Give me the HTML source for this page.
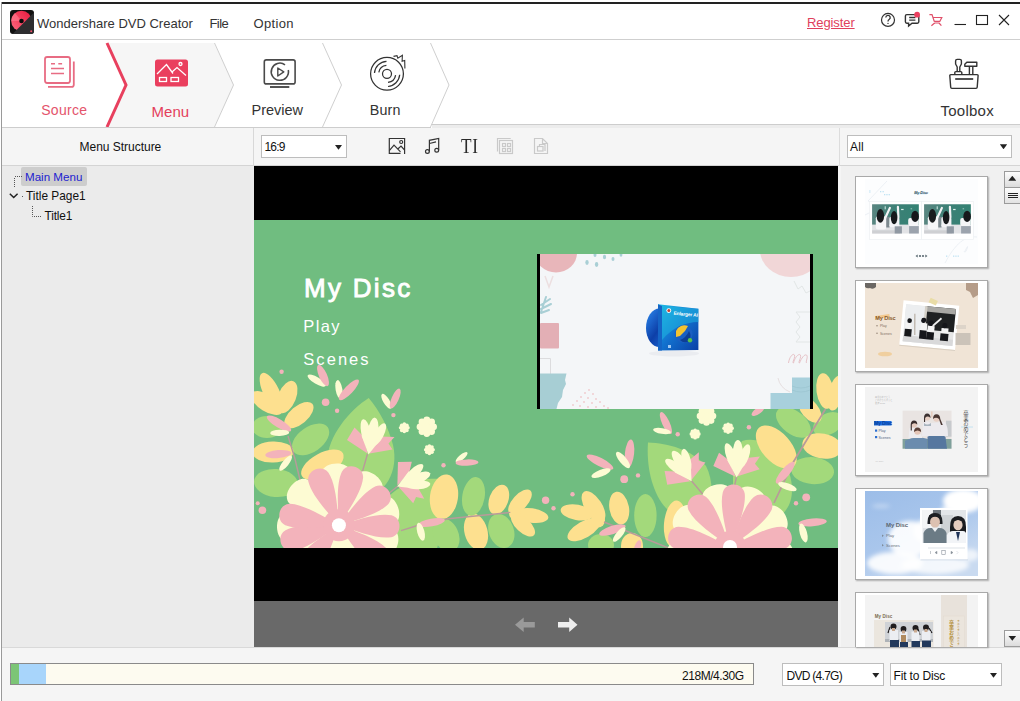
<!DOCTYPE html>
<html><head><meta charset="utf-8">
<style>
*{margin:0;padding:0;box-sizing:border-box}
html,body{width:1020px;height:701px;overflow:hidden;background:#fff}
body{font-family:"Liberation Sans","Noto Sans CJK JP",sans-serif;color:#333;position:relative}
.abs{position:absolute}
.t{position:absolute;white-space:nowrap;line-height:1}
#topline{left:1px;top:2px;width:1019px;height:2px;background:#222}
#leftline{left:1px;top:2px;width:1px;height:699px;background:#9a9a9a}
#tsep{left:2px;top:39px;width:1018px;height:1px;background:#cfcfcf}
#stepbar{left:2px;top:40px;width:1018px;height:87px;background:#fff}
#sep2{left:2px;top:127px;width:429px;height:1px;background:#cdcdcd}
#lhead{left:2px;top:128px;width:251px;height:37px;background:#f5f5f5}
#ltree{left:2px;top:166px;width:249px;height:481px;background:#ebebeb}
#lstrip{left:251px;top:166px;width:3px;height:481px;background:#ececec}
#lsep{left:2px;top:165px;width:1018px;height:1px;background:#d4d4d4}
#vsep{left:253px;top:128px;width:1px;height:38px;background:#d8d8d8}
#vsep2{left:839px;top:128px;width:1px;height:38px;background:#dcdcdc}
#chead{left:254px;top:128px;width:586px;height:37px;background:#f5f5f5}
#stage{left:254px;top:166px;width:584px;height:435px;background:#000}
#nav{left:254px;top:601px;width:584px;height:46px;background:#696969}
#right{left:838px;top:128px;width:182px;height:519px;background:#f0f0f0;border-left:3px solid #f5f5f5}
#rhead{left:839px;top:128px;width:181px;height:37px;background:#f5f5f5}
#bottom{left:2px;top:647px;width:1018px;height:54px;background:#f5f5f5}
#bsep{left:2px;top:647px;width:1018px;height:1px;background:#d9d9d9}
.combo{position:absolute;background:#fff;border:1px solid #bdbdbd}
.combo .t{font-size:12px;color:#111;top:5px;left:3px}
.arrow{position:absolute;width:7.4px;height:5px;margin:-0.7px 0 0 -0.2px;background:#222;clip-path:polygon(0 0,100% 0,50% 100%)}
.arrow.up{clip-path:polygon(50% 0,100% 100%,0 100%)}
</style></head><body>
<div class="abs" id="topline"></div>
<div class="abs" id="leftline"></div>
<div class="abs" id="tsep"></div>
<div class="abs" id="stepbar"></div>
<div class="abs" id="sep2"></div><div class="abs" style="left:431px;top:124px;width:589px;height:1px;background:#cdcdcd"></div><div class="abs" style="left:432px;top:125px;width:588px;height:3px;background:#ececec"></div>
<div class="abs" id="lhead"></div>
<div class="abs" id="ltree"></div>
<div class="abs" id="lstrip"></div>
<div class="abs" id="chead"></div>
<div class="abs" id="stage"></div>
<div class="abs" id="nav"></div>
<div class="abs" id="right"></div>
<div class="abs" id="rhead"></div>
<div class="abs" id="lsep"></div>
<div class="abs" id="vsep"></div><div class="abs" id="vsep2"></div>
<div class="abs" id="bottom"></div>
<div class="abs" id="bsep"></div>
<svg class="abs" style="left:10px;top:10px" width="24" height="24" viewBox="0 0 24 24">
<defs><clipPath id="lg"><rect x="0" y="0" width="24" height="24" rx="3"/></clipPath>
<linearGradient id="lgr" x1="0" y1="1" x2="1" y2="0"><stop offset="0" stop-color="#ff6a80"/><stop offset="1" stop-color="#e8173c"/></linearGradient></defs>
<g clip-path="url(#lg)"><rect width="24" height="24" fill="#111"/>
<circle cx="11.5" cy="11" r="10.3" fill="url(#lgr)"/>
<path d="M11.5 11 L1.2 11 A10.3 10.3 0 0 1 5 3 Z" fill="#ff8295" opacity=".55"/>
<circle cx="11.5" cy="11" r="2.3" fill="#0a0a0a"/>
<path d="M24 2.5 L24 24 L2.5 24 Z" fill="#2d2d2f"/>
<circle cx="21.2" cy="21.2" r="1" fill="#f0506a"/></g></svg>
<div class="t" style="left:37px;top:17px;font-size:13px;color:#333">Wondershare DVD Creator</div>
<div class="t" style="left:209.5px;top:17px;font-size:13px;color:#333;letter-spacing:-0.6px">File</div>
<div class="t" style="left:253.5px;top:17px;font-size:13px;color:#333;letter-spacing:0.35px">Option</div>
<div class="t" style="left:807px;top:16px;font-size:13px;color:#e0405c;text-decoration:underline;letter-spacing:-0.1px">Register</div>
<svg class="abs" style="left:875px;top:8px" width="145" height="26" viewBox="875 8 145 26" fill="none" stroke="#333" stroke-width="1.2">
<circle cx="888" cy="19.9" r="6.5"/>
<path d="M885.8 17.6 a2.2 2.2 0 1 1 3.3 1.9 c-0.8 0.5 -1.1 0.9 -1.1 2" stroke-width="1.3"/><circle cx="888" cy="23.4" r=".7" fill="#333" stroke="none"/>
<path d="M906.8 14.6 h10.6 a1.4 1.4 0 0 1 1.4 1.4 v5.8 a1.4 1.4 0 0 1 -1.4 1.4 h-5.4 l-3.4 2.9 v-2.9 h-1.8 a1.4 1.4 0 0 1 -1.4 -1.4 v-5.8 a1.4 1.4 0 0 1 1.4 -1.4z" stroke-width="1.4"/>
<path d="M909.2 17.5h6.2M909.2 20.2h6.2" stroke-width="1.3"/>
<circle cx="917.1" cy="14.7" r="2.9" fill="#ec3f5f" stroke="none"/>
<path d="M929.4 14.6 h2.6 l2.3 6.9 M933 17.5 h8.8 l-2 3.9 h-5.5 M934.6 23 h4.6 M934.6 23 l-3.2 2.7 M939 23 l2.4 2.7" stroke="#e0506a" stroke-width="1.2"/>
<path d="M954.5 24.5h11.5" stroke="#222" stroke-width="1.1"/>
<rect x="976.5" y="15.5" width="11" height="9" stroke="#222" stroke-width="1.1"/>
<path d="M999 15 l10 10 M1009 15 l-10 10" stroke="#222" stroke-width="1.1"/>
</svg>

<svg class="abs" style="left:2px;top:40px" width="1018" height="87" viewBox="2 40 1018 87">
<polygon points="107,43 214,43 233.500,85 214,127 107,127 126,85" fill="#f6f6f6"/>
<polyline points="107,43 126,85 107,127" fill="none" stroke="#e8405e" stroke-width="3"/>
<polyline points="214.5,43 233.5,85 214.5,127" fill="none" stroke="#cfcfcf" stroke-width="1"/>
<polyline points="322.5,43 341.5,85 322.5,127" fill="none" stroke="#cfcfcf" stroke-width="1"/>
<polyline points="430.5,43 449,85 430.5,127" fill="none" stroke="#cfcfcf" stroke-width="1"/>
<!-- source icon -->
<g fill="none" stroke="#e86c83" stroke-width="1.8">
<rect x="45" y="57" width="25" height="26" rx="2.2"/>
<path d="M73.8 61.5 v23.2 a2.2 2.2 0 0 1 -2.2 2.2 h-23.6" />
<path d="M51 63.7h4M58.3 63.7h3.8M51 68.5h13M51 73.5h13" stroke-width="1.5"/>
</g>
<!-- menu icon -->
<rect x="155" y="59.5" width="33" height="27" rx="2.5" fill="#ea3f5e"/>
<g fill="none" stroke="#fff" stroke-width="1.3">
<path d="M157 74 l9.5 -9.5 l6.5 9 M172 72 l5 -4.5 l9 8"/>
<circle cx="180.5" cy="64" r="1.5"/>
<rect x="159.500" y="77.500" width="7" height="4"/><rect x="171" y="77.500" width="7.500" height="4"/>
</g>
<!-- preview icon -->
<g fill="none" stroke="#4a4a4a" stroke-width="1.6">
<rect x="264.300" y="59.900" width="30.800" height="24" rx="2"/>
<path d="M285 64.800 A8.600 8.600 0 1 0 288.300 70"/>
<path d="M277.800 68 l6 3.900 l-6 4.100z" stroke-width="1.400" stroke-linejoin="round"/>
<path d="M270 87h19.300" stroke-width="1.900"/>
</g>
<!-- burn icon -->
<g fill="none" stroke="#333" stroke-width="1.250">
<circle cx="387" cy="73.800" r="16.400"/>
<circle cx="387" cy="73.800" r="4.500"/>
<path d="M374.500 73 A12.500 12.500 0 0 1 386.500 61.300"/>
<path d="M378.800 72.300 A8.500 8.500 0 0 1 386.400 65.300"/>
<path d="M399.700 74.800 A12.800 12.800 0 0 1 388 86.500"/>
<path d="M395.600 75.200 A8.600 8.600 0 0 1 388 82.400"/>
<path d="M393.500 56.400 l3.500 -0.800 l0.800 2.600 l4.600 -3 l-0.300 6 l2.600 -0.800 l0.200 8" stroke-width="1.100"/>
</g>
<!-- toolbox icon -->
<g fill="none" stroke="#333" stroke-width="1.400" stroke-linejoin="round">
<path d="M950.800 74.600 h26.300 a1 1 0 0 1 1 1.100 l-0.900 11.600 a1.200 1.200 0 0 1 -1.200 1.100 h-24.100 a1.200 1.200 0 0 1 -1.200 -1.100 l-0.900 -11.600 a1 1 0 0 1 1 -1.100z"/>
<path d="M955.200 79h18" stroke-width="1.700"/>
<path d="M954.800 74.400 v-1.800 a1 1 0 0 1 1 -1 h5 a1 1 0 0 1 1 1 v1.800 M957.200 71.500 v-4.500 l-1.600 -3 v-3 a1.600 1.600 0 0 1 1.600 -1.600 h2.600 a1.600 1.600 0 0 1 1.600 1.600 v3 l-1.600 3 v4.500"/>
<path d="M964.800 66.200 v-2 l2 -1.900 h10 v3.900z M969.400 66.200 v8.200 M972.800 66.200 v8.200"/>
</g>
</svg>
<div class="t" style="left:41.200px;top:103px;font-size:14px;color:#e4546c;letter-spacing:0.3px">Source</div>
<div class="t" style="left:151.600px;top:103.700px;font-size:15px;color:#e4405c">Menu</div>
<div class="t" style="left:251.500px;top:102.500px;font-size:14.500px;color:#333">Preview</div>
<div class="t" style="left:369.800px;top:102.800px;font-size:14.300px;color:#333;letter-spacing:0.15px">Burn</div>
<div class="t" style="left:940.500px;top:103px;font-size:15px;color:#333;letter-spacing:0.25px">Toolbox</div>

<div class="t" style="left:79.500px;top:141px;font-size:12px;color:#111;letter-spacing:-0.02px">Menu Structure</div>
<div class="abs" style="left:21px;top:167px;width:66px;height:19px;background:#cdcdcd;border-radius:2px"></div>
<div class="t" style="left:25px;top:171px;font-size:11.600px;color:#1c1cd0">Main Menu</div>
<div class="t" style="left:26px;top:190.500px;font-size:11.900px;color:#111">Title Page1</div>
<div class="t" style="left:44.500px;top:210.500px;font-size:11.900px;color:#111;letter-spacing:-0.15px">Title1</div>
<svg class="abs" style="left:2px;top:166px" width="60" height="60" viewBox="2 166 60 60" fill="none">
<path d="M14.500 187 V177 M15 176.500 H22" stroke="#555" stroke-width="1" stroke-dasharray="1 1"/>
<path d="M32.500 206 V216.500 H41" stroke="#555" stroke-width="1" stroke-dasharray="1 1"/>
<path d="M22 196.500h1" stroke="#555" stroke-width="1"/>
<path d="M9.800 193.800 l3.900 3.700 l3.900 -3.700" stroke="#222" stroke-width="1.500"/>
</svg>

<div class="combo" style="left:261px;top:135px;width:86px;height:23px"><div class="t" style="letter-spacing:-0.85px;left:2.500px">16:9</div><div class="arrow" style="left:73px;top:9.500px"></div></div>
<svg class="abs" style="left:380px;top:130px" width="180" height="32" viewBox="380 130 180 32" fill="none" stroke="#333" stroke-width="1.200">
<path d="M400.500 153.400 H389.300 V138.500 H404.600 V153.900"/>
<circle cx="401.200" cy="142" r="1.500"/>
<path d="M389.300 150.600 l4.700 -5.400 l6.500 6.600 M397.800 149 l3.200 -3 l3.600 4"/>
<circle cx="427.400" cy="151.500" r="1.900"/><circle cx="436.700" cy="150.200" r="1.900"/>
<path d="M429.400 151.500 V140.300 L438.700 138.400 V150.200 M429.400 143.500 L436 141.800"/>
<g stroke="#c9c9c9">
<path d="M497.500 151.600 V138.500 H510.700"/>
<rect x="499.500" y="140.500" width="13" height="13"/>
<rect x="502.500" y="143.500" width="3" height="3"/><rect x="507.500" y="143.500" width="3" height="3"/>
<rect x="502.500" y="148.500" width="3" height="3"/><rect x="507.500" y="148.500" width="3" height="3"/>
<path d="M534.500 138.500 H542.500 L547.500 143.500 V153.500 H534.500z M542.500 138.500 V143.500 H547.500"/>
<rect x="537.500" y="146.500" width="5.500" height="4.500"/><path d="M539.500 146.500 V144.500 H545 V151"/>
</g>
</svg>
<div class="t" style="left:461px;top:136px;font-family:'Liberation Serif',serif;font-size:20px;color:#2a2a2a;transform:scaleX(0.86);transform-origin:0 0;letter-spacing:1px">TI</div>

<!--STAGE_BEGIN--><svg class="abs" style="left:254px;top:220px" width="584" height="328" viewBox="254 220 584 328">
<defs><clipPath id="tc"><rect x="540" y="254" width="270" height="155"/></clipPath>
<linearGradient id="disc" x1="0" y1="0" x2="1" y2="1"><stop offset="0" stop-color="#2b8af0"/><stop offset=".5" stop-color="#0d3fa8"/><stop offset="1" stop-color="#1f78e6"/></linearGradient>
<linearGradient id="box" x1="0" y1="0" x2="1" y2="1"><stop offset="0" stop-color="#1fc0e6"/><stop offset=".5" stop-color="#1272cf"/><stop offset="1" stop-color="#0b3fa6"/></linearGradient></defs>
<rect x="254" y="220" width="584" height="328" fill="#70bd80"/>
<ellipse cx="267" cy="427" rx="11" ry="15" fill="#a3d97b" transform="rotate(90 267 427)"/>
<ellipse cx="310.6" cy="439.4" rx="12.5" ry="21" fill="#a3d97b" transform="rotate(55 310.6 439.4)"/>
<path d="M368.7,398 C350,410 328,435 327,462 C327,482 340,497 360,497 C386,497 399,470 393,445 C389,428 379,410 368.700,398Z" fill="#a3d97b" />
<path d="M441,479 C420,477 396,485 384,502 L380,548 L437,548 C446,525 447,500 441,479Z" fill="#a3d97b" />
<ellipse cx="276" cy="483" rx="14" ry="22" fill="#a3d97b" transform="rotate(95 276 483)"/>
<path d="M648,442.500 C646,470 654,497 668,510 L702,524 C714,503 714,482 706,466 C692,450 668,443 648,442.500Z" fill="#a3d97b" />
<path d="M742,441 C764,434 792,458 792,490 C792,512 776,522 760,522 L733,522 L733,462Z" fill="#a3d97b" />
<ellipse cx="793.4" cy="422.5" rx="11.5" ry="20" fill="#a3d97b" transform="rotate(-53 793.4 422.5)"/>
<ellipse cx="812.6" cy="470.6" rx="13.5" ry="21.5" fill="#a3d97b" transform="rotate(95 812.6 470.6)"/>
<ellipse cx="828" cy="424" rx="10.5" ry="16" fill="#a3d97b" transform="rotate(62 828 424)"/>
<ellipse cx="645.4" cy="515.6" rx="11.2" ry="21.5" fill="#a3d97b" transform="rotate(0 645.4 515.6)"/>
<ellipse cx="601" cy="545" rx="11" ry="13" fill="#a3d97b" transform="rotate(90 601 545)"/>
<ellipse cx="271.5" cy="392.5" rx="8" ry="21.5" fill="#fde08f" transform="rotate(-26 271.5 392.5)"/>
<ellipse cx="287" cy="397" rx="9" ry="17" fill="#fde08f" transform="rotate(22 287 397)"/>
<ellipse cx="267" cy="403" rx="8.5" ry="18" fill="#fde08f" transform="rotate(-58 267 403)"/>
<circle cx="279" cy="406" r="7" fill="#fde08f"/>
<ellipse cx="298.9" cy="415.1" rx="9" ry="17.5" fill="#fde08f" transform="rotate(50 298.9 415.1)"/>
<ellipse cx="273" cy="452" rx="10.5" ry="20.5" fill="#fde08f" transform="rotate(88 273 452)"/>
<ellipse cx="322.4" cy="464.7" rx="11.5" ry="23.5" fill="#fde08f" transform="rotate(61 322.4 464.7)"/>
<ellipse cx="444" cy="496.8" rx="14" ry="22.5" fill="#fde08f" transform="rotate(8 444 496.8)"/>
<ellipse cx="498.8" cy="499.6" rx="9.5" ry="15.5" fill="#fde08f" transform="rotate(20 498.8 499.6)"/>
<ellipse cx="520" cy="502" rx="7.5" ry="15.5" fill="#fde08f" transform="rotate(42 520 502)"/>
<ellipse cx="531.5" cy="515.5" rx="7.2" ry="17" fill="#fde08f" transform="rotate(98 531.5 515.5)"/>
<ellipse cx="523" cy="525" rx="7.2" ry="15" fill="#fde08f" transform="rotate(133 523 525)"/>
<circle cx="515" cy="513.5" r="6" fill="#fde08f"/>
<ellipse cx="476" cy="531.7" rx="11.5" ry="18.5" fill="#fde08f" transform="rotate(-15 476 531.7)"/>
<ellipse cx="593.5" cy="506.5" rx="8.5" ry="17.5" fill="#fde08f" transform="rotate(-33 593.5 506.5)"/>
<ellipse cx="577" cy="512.4" rx="7.8" ry="16.5" fill="#fde08f" transform="rotate(-80 577 512.4)"/>
<ellipse cx="584" cy="529.6" rx="8.2" ry="18.5" fill="#fde08f" transform="rotate(-120 584 529.6)"/>
<circle cx="598" cy="520.5" r="7" fill="#fde08f"/>
<ellipse cx="619.2" cy="508.1" rx="9.8" ry="16.5" fill="#fde08f" transform="rotate(-10 619.2 508.1)"/>
<ellipse cx="675" cy="524" rx="11" ry="23.5" fill="#fde08f" transform="rotate(5 675 524)"/>
<ellipse cx="632" cy="546" rx="11" ry="13" fill="#fde08f" transform="rotate(0 632 546)"/>
<ellipse cx="776.3" cy="447.1" rx="14.5" ry="26" fill="#fde08f" transform="rotate(-42 776.3 447.1)"/>
<ellipse cx="822.2" cy="446" rx="12.5" ry="20" fill="#fde08f" transform="rotate(100 822.2 446)"/>
<ellipse cx="825" cy="391" rx="8.5" ry="18" fill="#fde08f" transform="rotate(-8 825 391)"/>
<ellipse cx="836" cy="393" rx="7.5" ry="18" fill="#fde08f" transform="rotate(14 836 393)"/>
<ellipse cx="810" cy="410" rx="8.5" ry="15" fill="#fde08f" transform="rotate(-40 810 410)"/>
<ellipse cx="473.5" cy="496.4" rx="11.2" ry="19.5" fill="#a3d97b" transform="rotate(10 473.5 496.4)"/>
<ellipse cx="446" cy="535" rx="12.5" ry="17.5" fill="#a3d97b" transform="rotate(-25 446 535)"/>
<ellipse cx="501.3" cy="531" rx="12.5" ry="17.5" fill="#a3d97b" transform="rotate(-20 501.3 531)"/>
<path d="M288,436 L295,459 L300,480" fill="none" stroke="#b99a9a" stroke-width="1.4"/>
<path d="M367.500,454 L362,473" fill="none" stroke="#b99a9a" stroke-width="1.4"/>
<path d="M398,486 L388,494" fill="none" stroke="#b99a9a" stroke-width="1.4"/>
<path d="M401,530.600 L418.300,525.300 L448.200,518.800 L510.300,512.400" fill="none" stroke="#b99a9a" stroke-width="1.4"/>
<path d="M604,522 L668.500,548" fill="none" stroke="#b99a9a" stroke-width="1.4"/>
<path d="M691,480.300 L703,494.500" fill="none" stroke="#b99a9a" stroke-width="1.4"/>
<path d="M736.700,476 L734.500,486" fill="none" stroke="#b99a9a" stroke-width="1.4"/>
<path d="M825.500,409 L793.400,462 L774,503" fill="none" stroke="#b99a9a" stroke-width="1.7"/>
<ellipse cx="279" cy="423.5" rx="4.2" ry="14" fill="#f3b3bb" transform="rotate(-59 279 423.5)"/>
<ellipse cx="279.7" cy="432.8" rx="3.1" ry="9.5" fill="#fdfbd3" transform="rotate(88 279.7 432.8)"/>
<ellipse cx="278.3" cy="454.1" rx="4" ry="13" fill="#f3b3bb" transform="rotate(85 278.3 454.1)"/>
<ellipse cx="285.6" cy="463.2" rx="3.1" ry="9.5" fill="#fdfbd3" transform="rotate(39 285.6 463.2)"/>
<ellipse cx="316.8" cy="380.6" rx="3.4" ry="10.5" fill="#fdfbd3" transform="rotate(-60 316.8 380.6)"/>
<ellipse cx="323" cy="375.5" rx="4" ry="11.5" fill="#f3b3bb" transform="rotate(-24 323 375.5)"/>
<ellipse cx="339" cy="389.5" rx="3.4" ry="9.5" fill="#fdfbd3" transform="rotate(-10 339 389.5)"/>
<ellipse cx="348.9" cy="389.8" rx="4.2" ry="13.8" fill="#f3b3bb" transform="rotate(44 348.9 389.8)"/>
<ellipse cx="386.4" cy="401.2" rx="3.1" ry="8.5" fill="#fdfbd3" transform="rotate(-31 386.4 401.2)"/>
<ellipse cx="395.2" cy="398.6" rx="3.6" ry="10.8" fill="#f3b3bb" transform="rotate(24 395.2 398.6)"/>
<ellipse cx="461.6" cy="457.3" rx="2.6" ry="7.5" fill="#fdfbd3" transform="rotate(50 461.6 457.3)"/>
<ellipse cx="467" cy="462.6" rx="3.2" ry="11.5" fill="#f3b3bb" transform="rotate(88 467 462.6)"/>
<ellipse cx="431.5" cy="522.5" rx="3.9" ry="13.5" fill="#f3b3bb" transform="rotate(79 431.5 522.5)"/>
<ellipse cx="420.8" cy="531.7" rx="3.6" ry="9.2" fill="#fdfbd3" transform="rotate(-15 420.8 531.7)"/>
<ellipse cx="665.9" cy="423.1" rx="3.7" ry="12" fill="#f3b3bb" transform="rotate(-25 665.9 423.1)"/>
<ellipse cx="662" cy="431" rx="2.9" ry="9" fill="#fdfbd3" transform="rotate(100 662 431)"/>
<ellipse cx="629.5" cy="453.5" rx="4.6" ry="14" fill="#f3b3bb" transform="rotate(6 629.5 453.5)"/>
<ellipse cx="623" cy="460" rx="3.6" ry="10.2" fill="#fdfbd3" transform="rotate(-40 623 460)"/>
<ellipse cx="600" cy="462.1" rx="4.2" ry="14.8" fill="#f3b3bb" transform="rotate(-63 600 462.1)"/>
<ellipse cx="601" cy="473.2" rx="3.4" ry="10.2" fill="#fdfbd3" transform="rotate(69 601 473.2)"/>
<ellipse cx="612.4" cy="530" rx="4.2" ry="13.8" fill="#f3b3bb" transform="rotate(72 612.4 530)"/>
<ellipse cx="619.2" cy="534.5" rx="3.1" ry="9.2" fill="#fdfbd3" transform="rotate(40 619.2 534.5)"/>
<ellipse cx="637.5" cy="547" rx="3" ry="7" fill="#f3b3bb" transform="rotate(20 637.5 547)"/>
<ellipse cx="785.2" cy="472.7" rx="4.2" ry="13.8" fill="#f3b3bb" transform="rotate(40 785.2 472.7)"/>
<ellipse cx="787.4" cy="486.6" rx="3.4" ry="9.8" fill="#fdfbd3" transform="rotate(110 787.4 486.6)"/>
<ellipse cx="812.6" cy="522.4" rx="3.9" ry="14.2" fill="#f3b3bb" transform="rotate(85 812.6 522.4)"/>
<ellipse cx="803.4" cy="533" rx="3.6" ry="9.8" fill="#fdfbd3" transform="rotate(-15 803.4 533)"/>
<ellipse cx="758" cy="411" rx="3.1" ry="7.5" fill="#f3b3bb" transform="rotate(55 758 411)"/>
<circle cx="404.3" cy="427.8" r="4.2" fill="#fdfbd3"/>
<circle cx="408" cy="427.8" r="1.8" fill="#fdfbd3"/>
<circle cx="406.9" cy="430.4" r="1.8" fill="#fdfbd3"/>
<circle cx="404.3" cy="431.5" r="1.8" fill="#fdfbd3"/>
<circle cx="401.7" cy="430.4" r="1.8" fill="#fdfbd3"/>
<circle cx="400.6" cy="427.8" r="1.8" fill="#fdfbd3"/>
<circle cx="401.7" cy="425.2" r="1.8" fill="#fdfbd3"/>
<circle cx="404.3" cy="424.1" r="1.8" fill="#fdfbd3"/>
<circle cx="406.9" cy="425.2" r="1.8" fill="#fdfbd3"/>
<circle cx="426.8" cy="426.8" r="7.8" fill="#fdfbd3"/>
<circle cx="433.6" cy="426.8" r="3.4" fill="#fdfbd3"/>
<circle cx="431.6" cy="431.6" r="3.4" fill="#fdfbd3"/>
<circle cx="426.8" cy="433.6" r="3.4" fill="#fdfbd3"/>
<circle cx="422" cy="431.6" r="3.4" fill="#fdfbd3"/>
<circle cx="420" cy="426.8" r="3.4" fill="#fdfbd3"/>
<circle cx="422" cy="422" r="3.4" fill="#fdfbd3"/>
<circle cx="426.8" cy="420" r="3.4" fill="#fdfbd3"/>
<circle cx="431.6" cy="422" r="3.4" fill="#fdfbd3"/>
<circle cx="429.4" cy="449.7" r="4.2" fill="#fdfbd3"/>
<circle cx="433.1" cy="449.7" r="1.8" fill="#fdfbd3"/>
<circle cx="432" cy="452.3" r="1.8" fill="#fdfbd3"/>
<circle cx="429.4" cy="453.4" r="1.8" fill="#fdfbd3"/>
<circle cx="426.8" cy="452.3" r="1.8" fill="#fdfbd3"/>
<circle cx="425.7" cy="449.7" r="1.8" fill="#fdfbd3"/>
<circle cx="426.8" cy="447.1" r="1.8" fill="#fdfbd3"/>
<circle cx="429.4" cy="446" r="1.8" fill="#fdfbd3"/>
<circle cx="432" cy="447.1" r="1.8" fill="#fdfbd3"/>
<circle cx="706.5" cy="416" r="7.5" fill="#fdfbd3"/>
<circle cx="713" cy="416" r="3.3" fill="#fdfbd3"/>
<circle cx="711.1" cy="420.6" r="3.3" fill="#fdfbd3"/>
<circle cx="706.5" cy="422.5" r="3.3" fill="#fdfbd3"/>
<circle cx="701.9" cy="420.6" r="3.3" fill="#fdfbd3"/>
<circle cx="700" cy="416" r="3.3" fill="#fdfbd3"/>
<circle cx="701.9" cy="411.4" r="3.3" fill="#fdfbd3"/>
<circle cx="706.5" cy="409.5" r="3.3" fill="#fdfbd3"/>
<circle cx="711.1" cy="411.4" r="3.3" fill="#fdfbd3"/>
<circle cx="695.1" cy="434" r="4.3" fill="#fdfbd3"/>
<circle cx="698.8" cy="434" r="1.9" fill="#fdfbd3"/>
<circle cx="697.7" cy="436.6" r="1.9" fill="#fdfbd3"/>
<circle cx="695.1" cy="437.7" r="1.9" fill="#fdfbd3"/>
<circle cx="692.5" cy="436.6" r="1.9" fill="#fdfbd3"/>
<circle cx="691.4" cy="434" r="1.9" fill="#fdfbd3"/>
<circle cx="692.5" cy="431.4" r="1.9" fill="#fdfbd3"/>
<circle cx="695.1" cy="430.3" r="1.9" fill="#fdfbd3"/>
<circle cx="697.7" cy="431.4" r="1.9" fill="#fdfbd3"/>
<circle cx="728.1" cy="428.2" r="4.4" fill="#fdfbd3"/>
<circle cx="732" cy="428.2" r="1.9" fill="#fdfbd3"/>
<circle cx="730.8" cy="430.9" r="1.9" fill="#fdfbd3"/>
<circle cx="728.1" cy="432.1" r="1.9" fill="#fdfbd3"/>
<circle cx="725.4" cy="430.9" r="1.9" fill="#fdfbd3"/>
<circle cx="724.2" cy="428.2" r="1.9" fill="#fdfbd3"/>
<circle cx="725.4" cy="425.5" r="1.9" fill="#fdfbd3"/>
<circle cx="728.1" cy="424.3" r="1.9" fill="#fdfbd3"/>
<circle cx="730.8" cy="425.5" r="1.9" fill="#fdfbd3"/>
<g transform="translate(368.5 453.5) rotate(0) scale(1.0)">
<path d="M-1,0 L-21.5,-13.5 L-14,-26 L-6,-18 C-4,-12 -2,-6 -1,0Z" fill="#f3b3bb"/>
<path d="M1,0 L24,-4 L20,-10 L26,-16.500 L12,-17 C6,-12 3,-6 1,0Z" fill="#f3b3bb"/>
<ellipse cx="-2.500" cy="-21" rx="4.800" ry="13.500" fill="#fdfbd3" transform="rotate(-12 -2.500 -21)"/>
<ellipse cx="4.500" cy="-22" rx="5.200" ry="14" fill="#fdfbd3" transform="rotate(8 4.500 -22)"/>
<ellipse cx="10.500" cy="-19" rx="4.600" ry="12.500" fill="#fdfbd3" transform="rotate(28 10.500 -19)"/>
<path d="M0,1 L-7,-18 L12,-14Z" fill="#fdfbd3"/>
</g>
<g transform="translate(397.9 486) rotate(58) scale(0.95)">
<path d="M-1,0 L-21.5,-13.5 L-14,-26 L-6,-18 C-4,-12 -2,-6 -1,0Z" fill="#f3b3bb"/>
<path d="M1,0 L24,-4 L20,-10 L26,-16.500 L12,-17 C6,-12 3,-6 1,0Z" fill="#f3b3bb"/>
<ellipse cx="-2.500" cy="-21" rx="4.800" ry="13.500" fill="#fdfbd3" transform="rotate(-12 -2.500 -21)"/>
<ellipse cx="4.500" cy="-22" rx="5.200" ry="14" fill="#fdfbd3" transform="rotate(8 4.500 -22)"/>
<ellipse cx="10.500" cy="-19" rx="4.600" ry="12.500" fill="#fdfbd3" transform="rotate(28 10.500 -19)"/>
<path d="M0,1 L-7,-18 L12,-14Z" fill="#fdfbd3"/>
</g>
<g transform="translate(691 480.5) rotate(-42) scale(0.95)">
<path d="M-1,0 L-21.5,-13.5 L-14,-26 L-6,-18 C-4,-12 -2,-6 -1,0Z" fill="#f3b3bb"/>
<path d="M1,0 L24,-4 L20,-10 L26,-16.500 L12,-17 C6,-12 3,-6 1,0Z" fill="#f3b3bb"/>
<ellipse cx="-2.500" cy="-21" rx="4.800" ry="13.500" fill="#fdfbd3" transform="rotate(-12 -2.500 -21)"/>
<ellipse cx="4.500" cy="-22" rx="5.200" ry="14" fill="#fdfbd3" transform="rotate(8 4.500 -22)"/>
<ellipse cx="10.500" cy="-19" rx="4.600" ry="12.500" fill="#fdfbd3" transform="rotate(28 10.500 -19)"/>
<path d="M0,1 L-7,-18 L12,-14Z" fill="#fdfbd3"/>
</g>
<g transform="translate(736.5 476.5) rotate(-8) scale(1.0)">
<path d="M-1,0 L-21.5,-13.5 L-14,-26 L-6,-18 C-4,-12 -2,-6 -1,0Z" fill="#f3b3bb"/>
<path d="M1,0 L24,-4 L20,-10 L26,-16.500 L12,-17 C6,-12 3,-6 1,0Z" fill="#f3b3bb"/>
<ellipse cx="-2.500" cy="-21" rx="4.800" ry="13.500" fill="#fdfbd3" transform="rotate(-12 -2.500 -21)"/>
<ellipse cx="4.500" cy="-22" rx="5.200" ry="14" fill="#fdfbd3" transform="rotate(8 4.500 -22)"/>
<ellipse cx="10.500" cy="-19" rx="4.600" ry="12.500" fill="#fdfbd3" transform="rotate(28 10.500 -19)"/>
<path d="M0,1 L-7,-18 L12,-14Z" fill="#fdfbd3"/>
</g>
<circle cx="338.9" cy="525.3" r="40" fill="#fdfbd3"/>
<path d="M0,0 C-8.1,-18.7 -18.1,-39.8 -14.9,-53.5 C-11.3,-64.7 11.3,-64.7 14.9,-53.5 C18.1,-39.8 8.1,-18.7 0,0Z" fill="#fdfbd3" transform="translate(338.9 525.3) rotate(-92)"/>
<path d="M0,0 C-8.1,-18.7 -18.1,-39.8 -14.9,-53.5 C-11.3,-64.7 11.3,-64.7 14.9,-53.5 C18.1,-39.8 8.1,-18.7 0,0Z" fill="#fdfbd3" transform="translate(338.9 525.3) rotate(-50)"/>
<path d="M0,0 C-8.1,-18.7 -18.1,-39.8 -14.9,-53.5 C-11.3,-64.7 11.3,-64.7 14.9,-53.5 C18.1,-39.8 8.1,-18.7 0,0Z" fill="#fdfbd3" transform="translate(338.9 525.3) rotate(-3)"/>
<path d="M0,0 C-8.1,-18.7 -18.1,-39.8 -14.9,-53.5 C-11.3,-64.7 11.3,-64.7 14.9,-53.5 C18.1,-39.8 8.1,-18.7 0,0Z" fill="#fdfbd3" transform="translate(338.9 525.3) rotate(36)"/>
<path d="M0,0 C-8.1,-18.7 -18.1,-39.8 -14.9,-53.5 C-11.3,-64.7 11.3,-64.7 14.9,-53.5 C18.1,-39.8 8.1,-18.7 0,0Z" fill="#fdfbd3" transform="translate(338.9 525.3) rotate(74)"/>
<path d="M0,0 C-8.1,-18.7 -18.1,-39.8 -14.9,-53.5 C-11.3,-64.7 11.3,-64.7 14.9,-53.5 C18.1,-39.8 8.1,-18.7 0,0Z" fill="#fdfbd3" transform="translate(338.9 525.3) rotate(110)"/>
<path d="M0,0 C-8.1,-18.7 -18.1,-39.8 -14.9,-53.5 C-11.3,-64.7 11.3,-64.7 14.9,-53.5 C18.1,-39.8 8.1,-18.7 0,0Z" fill="#fdfbd3" transform="translate(338.9 525.3) rotate(-125)"/>
<path d="M0,0 C-6,-18.3 -13.4,-39 -11,-52.5 C-8.4,-63.4 8.4,-63.4 11,-52.5 C13.4,-39 6,-18.3 0,0Z" fill="#f3b3bb" transform="translate(338.9 525.3) rotate(-107)"/>
<path d="M0,0 C-6,-18.3 -13.4,-39 -11,-52.5 C-8.4,-63.4 8.4,-63.4 11,-52.5 C13.4,-39 6,-18.3 0,0Z" fill="#f3b3bb" transform="translate(338.9 525.3) rotate(-78)"/>
<path d="M0,0 C-6,-18.3 -13.4,-39 -11,-52.5 C-8.4,-63.4 8.4,-63.4 11,-52.5 C13.4,-39 6,-18.3 0,0Z" fill="#f3b3bb" transform="translate(338.9 525.3) rotate(-23)"/>
<path d="M0,0 C-6,-18.3 -13.4,-39 -11,-52.5 C-8.4,-63.4 8.4,-63.4 11,-52.5 C13.4,-39 6,-18.3 0,0Z" fill="#f3b3bb" transform="translate(338.9 525.3) rotate(15)"/>
<path d="M0,0 C-6,-18.3 -13.4,-39 -11,-52.5 C-8.4,-63.4 8.4,-63.4 11,-52.5 C13.4,-39 6,-18.3 0,0Z" fill="#f3b3bb" transform="translate(338.9 525.3) rotate(55)"/>
<path d="M0,0 C-6,-18.3 -13.4,-39 -11,-52.5 C-8.4,-63.4 8.4,-63.4 11,-52.5 C13.4,-39 6,-18.3 0,0Z" fill="#f3b3bb" transform="translate(338.9 525.3) rotate(91)"/>
<path d="M0,0 C-6,-18.3 -13.4,-39 -11,-52.5 C-8.4,-63.4 8.4,-63.4 11,-52.5 C13.4,-39 6,-18.3 0,0Z" fill="#f3b3bb" transform="translate(338.9 525.3) rotate(128)"/>
<path d="M0,0 C-6,-18.3 -13.4,-39 -11,-52.5 C-8.4,-63.4 8.4,-63.4 11,-52.5 C13.4,-39 6,-18.3 0,0Z" fill="#f3b3bb" transform="translate(338.9 525.3) rotate(-142)"/>
<circle cx="338.9" cy="525.3" r="16" fill="#f3b3bb"/>
<circle cx="338.9" cy="525.3" r="7" fill="#ffffff"/>
<circle cx="730" cy="547" r="40" fill="#fdfbd3"/>
<path d="M0,0 C-8.1,-19.3 -18.1,-41.1 -14.9,-55.3 C-11.3,-66.8 11.3,-66.8 14.9,-55.3 C18.1,-41.1 8.1,-19.3 0,0Z" fill="#fdfbd3" transform="translate(730 547) rotate(-58)"/>
<path d="M0,0 C-8.1,-19.3 -18.1,-41.1 -14.9,-55.3 C-11.3,-66.8 11.3,-66.8 14.9,-55.3 C18.1,-41.1 8.1,-19.3 0,0Z" fill="#fdfbd3" transform="translate(730 547) rotate(-14)"/>
<path d="M0,0 C-8.1,-19.3 -18.1,-41.1 -14.9,-55.3 C-11.3,-66.8 11.3,-66.8 14.9,-55.3 C18.1,-41.1 8.1,-19.3 0,0Z" fill="#fdfbd3" transform="translate(730 547) rotate(23.5)"/>
<path d="M0,0 C-8.1,-19.3 -18.1,-41.1 -14.9,-55.3 C-11.3,-66.8 11.3,-66.8 14.9,-55.3 C18.1,-41.1 8.1,-19.3 0,0Z" fill="#fdfbd3" transform="translate(730 547) rotate(59)"/>
<path d="M0,0 C-8.1,-19.3 -18.1,-41.1 -14.9,-55.3 C-11.3,-66.8 11.3,-66.8 14.9,-55.3 C18.1,-41.1 8.1,-19.3 0,0Z" fill="#fdfbd3" transform="translate(730 547) rotate(100)"/>
<path d="M0,0 C-8.1,-19.3 -18.1,-41.1 -14.9,-55.3 C-11.3,-66.8 11.3,-66.8 14.9,-55.3 C18.1,-41.1 8.1,-19.3 0,0Z" fill="#fdfbd3" transform="translate(730 547) rotate(-100)"/>
<path d="M0,0 C-6,-18.9 -13.4,-40.3 -11,-54.2 C-8.4,-65.5 8.4,-65.5 11,-54.2 C13.4,-40.3 6,-18.9 0,0Z" fill="#f3b3bb" transform="translate(730 547) rotate(-80)"/>
<path d="M0,0 C-6,-18.9 -13.4,-40.3 -11,-54.2 C-8.4,-65.5 8.4,-65.5 11,-54.2 C13.4,-40.3 6,-18.9 0,0Z" fill="#f3b3bb" transform="translate(730 547) rotate(-37)"/>
<path d="M0,0 C-6,-18.9 -13.4,-40.3 -11,-54.2 C-8.4,-65.5 8.4,-65.5 11,-54.2 C13.4,-40.3 6,-18.9 0,0Z" fill="#f3b3bb" transform="translate(730 547) rotate(4)"/>
<path d="M0,0 C-6,-18.9 -13.4,-40.3 -11,-54.2 C-8.4,-65.5 8.4,-65.5 11,-54.2 C13.4,-40.3 6,-18.9 0,0Z" fill="#f3b3bb" transform="translate(730 547) rotate(37)"/>
<path d="M0,0 C-6,-18.9 -13.4,-40.3 -11,-54.2 C-8.4,-65.5 8.4,-65.5 11,-54.2 C13.4,-40.3 6,-18.9 0,0Z" fill="#f3b3bb" transform="translate(730 547) rotate(80)"/>
<circle cx="730" cy="547" r="16" fill="#f3b3bb"/>
<circle cx="730" cy="547" r="7" fill="#ffffff"/>
<circle cx="281.6" cy="371.8" r="2.2" fill="#f3b3bb"/>
<circle cx="325.6" cy="402.2" r="3.8" fill="#f3b3bb"/>
<circle cx="337.1" cy="410.7" r="2.2" fill="#f3b3bb"/>
<circle cx="393.4" cy="415.1" r="2.2" fill="#f3b3bb"/>
<circle cx="257.7" cy="503.2" r="2" fill="#f3b3bb"/>
<circle cx="262.4" cy="510.3" r="3.8" fill="#f3b3bb"/>
<circle cx="443.5" cy="465.3" r="2.2" fill="#f3b3bb"/>
<circle cx="545.6" cy="500.2" r="3.7" fill="#f3b3bb"/>
<circle cx="553.5" cy="508.3" r="2.2" fill="#f3b3bb"/>
<circle cx="677.7" cy="434.3" r="2.2" fill="#f3b3bb"/>
<circle cx="624.2" cy="479.2" r="3.9" fill="#f3b3bb"/>
<circle cx="638" cy="475.4" r="2.2" fill="#f3b3bb"/>
<circle cx="572.5" cy="494.2" r="2.2" fill="#f3b3bb"/>
<circle cx="748.9" cy="427.2" r="2.2" fill="#f3b3bb"/>
<circle cx="806.2" cy="497.3" r="3.9" fill="#f3b3bb"/>
<circle cx="796" cy="503.3" r="2.2" fill="#f3b3bb"/>
<text x="304" y="296.800" font-family="'Liberation Sans',sans-serif" font-size="26" fill="#fff" stroke="#fff" stroke-width=".900" letter-spacing="2.300">My Disc</text>
<text x="303.300" y="331.900" font-family="'Liberation Sans',sans-serif" font-size="16.500" fill="#fff" letter-spacing="1.400">Play</text>
<text x="303.300" y="364.700" font-family="'Liberation Sans',sans-serif" font-size="16.500" fill="#fff" letter-spacing="2.050">Scenes</text>
<rect x="537" y="254" width="276" height="155" fill="#000"/>
<rect x="540" y="254" width="270" height="155" fill="#f4f6f8"/>
<g clip-path="url(#tc)">
<ellipse cx="556" cy="253" rx="21" ry="19.500" fill="#e8b6ba"/>
<ellipse cx="791" cy="250" rx="31" ry="27" fill="#f1d6d7"/>
<path d="M545 276 l4 11 l4 -11" fill="none" stroke="#ecdfe0" stroke-width="1.500"/>
<g fill="#a9cfd5"><ellipse cx="587" cy="262.500" rx="1.700" ry="2.400"/><ellipse cx="596.600" cy="264.500" rx="1.700" ry="2.400"/><ellipse cx="604.500" cy="257" rx="1.600" ry="2.200"/><ellipse cx="595" cy="255" rx="1.500" ry="2"/><ellipse cx="613" cy="259" rx="1.500" ry="2"/><ellipse cx="621" cy="255" rx="1.400" ry="1.800"/></g>
<path d="M541 312 L546 297 M541 305 L550 299 M541 309 L551 304 M541 313 L549 310" fill="none" stroke="#a9cfd5" stroke-width="2" stroke-linecap="round"/>
<rect x="540" y="323" width="19" height="25.500" fill="#e3afb5" rx="1"/>
<path d="M540 358.500 h10.500 v22 q0 8 -10.500 10" fill="none" stroke="#dcdcde" stroke-width="1"/>
<path d="M540 373.600 H566.500 L565 380 L566 384 L563 390 L562 397 L558 403 L556.500 409 H540Z" fill="#a7ced4"/>
<g fill="#f0cdd1"><circle cx="589" cy="390" r="1"/><circle cx="585" cy="393" r="1"/><circle cx="593" cy="394" r="1"/><circle cx="581" cy="397" r="1"/><circle cx="588" cy="398" r="1"/><circle cx="596" cy="399" r="1"/><circle cx="577" cy="401" r="1"/><circle cx="584" cy="402" r="1"/><circle cx="592" cy="403" r="1"/><circle cx="600" cy="402" r="1"/><circle cx="573" cy="405" r="1"/><circle cx="580" cy="406" r="1"/><circle cx="588" cy="407" r="1"/><circle cx="596" cy="407" r="1"/><circle cx="604" cy="406" r="1"/><circle cx="608" cy="408" r="1"/></g>
<path d="M794 281 l4 8 l4 -3 l4 7 l4 -2 M796 312 h14 M796 312 l4 5 l-4 5 l4 5 l-4 5 l4 5 l-4 5 h14" fill="none" stroke="#e2e6e6" stroke-width="1"/>
<path d="M788.500 363 c1 -7 5 -10 6 -8 c1 3 -3 8 -1 8 c1 -5 5 -10 7 -8 c1 3 -3 8 -1 8 c2 -5 5 -9 7 -8 c2 2 -1 6 0 8" fill="none" stroke="#e7c3c8" stroke-width="1"/>
<path d="M778 378 q2 10 12 14" fill="none" stroke="#e6dfe0" stroke-width="1"/>
<rect x="792" y="377.500" width="18" height="16" fill="#a8d0dc"/>
<rect x="770.500" y="393" width="39.500" height="16" fill="#a8d0dc"/>
<path d="M792 386 q9 4 18 0 M792 390 q9 4 18 0" fill="none" stroke="#9cc5d0" stroke-width=".800"/>
</g>
<!-- dvd box -->
<ellipse cx="674" cy="353.500" rx="25" ry="3" fill="#eaecf0"/>
<ellipse cx="659.500" cy="327.800" rx="13.500" ry="19.300" fill="url(#disc)"/>
<ellipse cx="661" cy="327.800" rx="3" ry="4.500" fill="#0b3f9e"/>
<path d="M658 304.300 L698.400 308.800 V350 L658 350.600Z" fill="url(#box)"/>
<path d="M658 304.300 L662 306 V350.500 L658 350.600Z" fill="#1565c6"/>
<path d="M662 306 L698.400 308.800 V322 C685 322 672 328 662 340Z" fill="#1fb4e0" opacity=".55"/>
<circle cx="683.600" cy="334" r="9" fill="#1a5fc2"/>
<path d="M676 331 a9 9 0 0 1 12 -5 l-3 5 l-5 5 l-4 1z" fill="#f4c430"/>
<path d="M680 340 q6 -2 9 -9 q3 5 0 10 q-5 3 -9 -1z" fill="#0e3f95"/>
<circle cx="690" cy="340.200" r="2.200" fill="#58c34a"/>
<circle cx="668.800" cy="310.600" r="2.400" fill="#fff"/><circle cx="668.800" cy="310.600" r="1.500" fill="#c8412f"/>
<rect x="668" y="345" width="3" height="3" fill="#9ec9f5"/>

<text x="673.500" y="314.800" font-family="'Liberation Sans',sans-serif" font-size="4.900" font-weight="700" fill="#fff" letter-spacing="-.15" transform="rotate(5 673.500 314.500)">Enlarger AI</text>
</svg>
<svg class="abs" style="left:500px;top:610px" width="100" height="30" viewBox="500 610 100 30">
<path d="M515 624.800 l8.700 -7.300 v4.500 h11.100 v5.600 h-11.100 v4.500z" fill="#9a9a9a"/>
<path d="M577.500 624.800 l-8.300 -7.300 v4.500 h-11.200 v5.600 h11.200 v4.500z" fill="#eeeeee"/>
</svg>
<!--STAGE_END-->
<!--RIGHT_BEGIN--><style>.card{position:absolute;left:855px;width:133px;background:#fff;border:1px solid #a9a9a9;box-shadow:1px 1px 1.500px rgba(0,0,0,.28);overflow:hidden}</style>
<div class="combo" style="left:847px;top:135px;width:165px;height:23px"><div class="t" style="left:2px;top:5px;font-size:12px;letter-spacing:0.2px">All</div><div class="arrow" style="left:152px;top:9px"></div></div>
<div class="card" style="top:176px;height:92px"><svg width="113" height="85" viewBox="0 0 113 85" style="position:absolute;left:9px;top:2px"><rect width="113" height="85" fill="#fcfdfe"/>
<path d="M3 22 L22 2 M3 22 L13 26 M0 36 L20 26 M80 84 Q95 55 112 58 M100 72 q4 -8 2 -2 q-2 5 -3 2" fill="none" stroke="#e8eef3" stroke-width=".8"/>
<rect x="49" y="13.500" width="13" height="1.800" fill="#c6e6f5"/>
<text x="49.200" y="14.500" font-family="'Liberation Sans','Noto Sans CJK JP',sans-serif" font-size="3.700" font-weight="700" font-style="italic" fill="#2f4a58">My Disc</text>
<g fill="#bfe3f3"><rect x="15" y="12" width="1.300" height="1.300"/><rect x="17.500" y="12" width="1.300" height="1.300"/><rect x="19" y="15" width="1.300" height="1.300"/><rect x="21.300" y="15" width="1.300" height="1.300"/><rect x="23.600" y="15" width="1.300" height="1.300"/><rect x="4.500" y="11" width=".8" height="3"/>
<rect x="81" y="76.500" width="1.300" height="1.300"/><rect x="88" y="76.500" width="1.300" height="1.300"/><rect x="90.300" y="76.500" width="1.300" height="1.300"/><rect x="92.600" y="76.500" width="1.300" height="1.300"/></g>
<defs><linearGradient id="cb" x1="0" y1="0" x2="1" y2="0"><stop offset="0" stop-color="#5a8681"/><stop offset=".5" stop-color="#3c8076"/><stop offset="1" stop-color="#338273"/></linearGradient></defs><rect x="4.5" y="22.5" width="52" height="38" fill="#fff" stroke="#edf0f3" stroke-width=".7"/><rect x="7.1" y="25.3" width="46.7" height="29.2" fill="#e2e3e6" /><rect x="7.1" y="25.3" width="46.700" height="20.300" fill="url(#cb)"/><rect x="7.1" y="51.3" width="28.0" height="3.2" fill="#cfd0d3" /><rect x="19.6" y="37.8" width="4.9" height="10.7" fill="#7d898f" /><rect x="10.8" y="37.3" width="10.4" height="13.2" fill="#f6f6f8" rx="2"/><path d="M20.6 38.3 L24.9 28.9" stroke="#f3f3f5" stroke-width="2.2" stroke-linecap="round"/><ellipse cx="15.4" cy="36.9" rx="3.7" ry="6.9" fill="#191b1e"/><rect x="24.3" y="37.8" width="10.1" height="10.5" fill="#f3f3f6" rx="2"/><path d="M33.4 38.3 L32.9 27.9" stroke="#f1f1f3" stroke-width="2.2" stroke-linecap="round"/><ellipse cx="29.1" cy="38.7" rx="3.3" ry="6.6" fill="#17191c"/><rect x="29.7" y="47.3" width="7.2" height="7.2" fill="#9199a3" /><rect x="43.2" y="39.1" width="10.6" height="8.0" fill="#f5f5f7" rx="2"/><ellipse cx="50.1" cy="37.4" rx="3.8" ry="5.6" fill="#16181b"/><rect x="44.1" y="47.1" width="9.7" height="7.4" fill="#9ca3ad" /><rect x="19.7" y="27.3" width="1.0" height="3.0" fill="#d9f0ec" /><rect x="36.1" y="29.9" width="2.5" height="1.2" fill="#d9f0ec" /><rect x="45.6" y="29.3" width="1.5" height="1.0" fill="#9cc8c0" /><rect x="56.5" y="22.5" width="52" height="38" fill="#fff" stroke="#edf0f3" stroke-width=".7"/><rect x="59.1" y="25.3" width="46.7" height="29.2" fill="#e2e3e6" /><rect x="59.1" y="25.3" width="46.700" height="20.300" fill="url(#cb)"/><rect x="59.1" y="51.3" width="28.0" height="3.2" fill="#cfd0d3" /><rect x="71.6" y="37.8" width="4.9" height="10.7" fill="#7d898f" /><rect x="62.8" y="37.3" width="10.4" height="13.2" fill="#f6f6f8" rx="2"/><path d="M72.6 38.3 L76.9 28.9" stroke="#f3f3f5" stroke-width="2.2" stroke-linecap="round"/><ellipse cx="67.4" cy="36.9" rx="3.7" ry="6.9" fill="#191b1e"/><rect x="76.3" y="37.8" width="10.1" height="10.5" fill="#f3f3f6" rx="2"/><path d="M85.4 38.3 L84.9 27.9" stroke="#f1f1f3" stroke-width="2.2" stroke-linecap="round"/><ellipse cx="81.1" cy="38.7" rx="3.3" ry="6.6" fill="#17191c"/><rect x="81.7" y="47.3" width="7.2" height="7.2" fill="#9199a3" /><rect x="95.2" y="39.1" width="10.6" height="8.0" fill="#f5f5f7" rx="2"/><ellipse cx="102.1" cy="37.4" rx="3.8" ry="5.6" fill="#16181b"/><rect x="96.1" y="47.1" width="9.7" height="7.4" fill="#9ca3ad" /><rect x="71.7" y="27.3" width="1.0" height="3.0" fill="#d9f0ec" /><rect x="88.1" y="29.9" width="2.5" height="1.2" fill="#d9f0ec" /><rect x="97.6" y="29.3" width="1.5" height="1.0" fill="#9cc8c0" />
<path d="M50.500 77 l2.200 -1.500 v3z M62.500 77 l-2.200 -1.500 v3z" fill="#5b6a72"/><circle cx="55" cy="77" r="1.100" fill="#5b6a72"/><circle cx="58" cy="77" r="1.100" fill="#5b6a72"/></svg></div><div class="card" style="top:280px;height:92px"><svg width="113" height="85" viewBox="0 0 113 85" style="position:absolute;left:9px;top:2px"><rect width="113" height="85" fill="#f0e4d6"/>

<path d="M0 0 h11 v4 q-3 3 -6 1 q-3 1 -5 -1z" fill="#6b6763"/>
<path d="M101 0 h12 v12 l-5 3 l-3 -6 l-4 -2z" fill="#b59c88"/>
<g transform="rotate(5.500 64 40) translate(0 -0.8) scale(1 1.06)"><rect x="36.500" y="19.500" width="56" height="42" fill="#fff"/><rect x="36.500" y="61.500" width="56" height="1" fill="#d9cfc2"/>
<rect x="39.500" y="23" width="50" height="35" fill="#e6e6e6"/>
<rect x="60" y="23" width="29.500" height="22" fill="#1f2122"/><rect x="60" y="23" width="29.500" height="5" fill="#a9a8a4"/><rect x="58" y="23" width="3" height="35" fill="#d4d0c8"/>
<rect x="39.500" y="23" width="19" height="35" fill="#eceef0"/><path d="M49 31 l2 20" stroke="#b8b0a4" stroke-width="1.200"/>
<rect x="39.500" y="52" width="50" height="6" fill="#d9d9da"/>
<rect x="41" y="40" width="6" height="7" fill="#f3f3f3"/><rect x="40.500" y="46" width="7" height="7" fill="#17181c"/><circle cx="44.500" cy="38" r="2.300" fill="#15161a"/>
<rect x="56" y="39" width="6.500" height="8" fill="#f3f3f3"/><rect x="55.500" y="46" width="7" height="8" fill="#16171b"/><circle cx="58.500" cy="36.500" r="2.500" fill="#15161a"/>
<rect x="63" y="41" width="7" height="7" fill="#f4f4f4"/><rect x="62.500" y="47" width="7.500" height="7" fill="#15161a"/><circle cx="66" cy="38.500" r="2.600" fill="#15161a"/><path d="M68 41 l8 -8" stroke="#eee" stroke-width="1.800"/>
<rect x="77" y="42" width="7" height="6" fill="#f2f2f2"/><rect x="76.500" y="47" width="8" height="7" fill="#17181c"/><circle cx="80" cy="39.500" r="2.500" fill="#15161a"/></g>
<rect x="64.500" y="16" width="8" height="5" fill="#e9dca6" transform="rotate(25 68 18)"/>
<rect x="90.500" y="50" width="15" height="12" fill="#cbc3b9"/><rect x="91" y="42" width="10" height="4" fill="#ddd4c9"/>
<ellipse cx="20" cy="71" rx="7" ry="2.300" fill="#f0cf9f"/>
<rect x="10.500" y="32" width="14" height="3" fill="#f2c88e" transform="rotate(-8 17 33)"/>
<text x="10.200" y="37" font-family="'Liberation Sans','Noto Sans CJK JP',sans-serif" font-size="5.600" font-weight="700" fill="#8a5a2c" letter-spacing="-.1">My Disc</text>
<text x="15" y="44" font-family="'Liberation Sans','Noto Sans CJK JP',sans-serif" font-size="3.500" fill="#7d6e60">Play</text><circle cx="12" cy="42.800" r=".8" fill="#9a8a7a"/>
<text x="15" y="51.500" font-family="'Liberation Sans','Noto Sans CJK JP',sans-serif" font-size="3.500" fill="#7d6e60">Scenes</text><circle cx="12" cy="50.300" r=".8" fill="#9a8a7a"/></svg></div><div class="card" style="top:384px;height:92px"><svg width="113" height="85" viewBox="0 0 113 85" style="position:absolute;left:9px;top:2px"><rect width="113" height="85" fill="#f3f3f3"/>
<rect x="37.600" y="23.700" width="48.900" height="38" fill="#e9e4e2"/>
<rect x="81" y="33.700" width="5.500" height="16" fill="#c7cacd"/>
<rect x="37.600" y="52" width="48.900" height="9.700" fill="#7fa09b"/>
<path d="M40 61.700 v-8 q10 -5 22 -2 v10z" fill="#6b8cae"/>
<path d="M62.500 61.700 v-12 q9 -6 18 0 l1.500 12z" fill="#56779f"/>
<path d="M58 36 q4 -3 8 0 l14 -1 q3 4 3 14 h-26z" fill="#eceaee"/>
<path d="M44.500 41 q5 -2 9 1 l4 9 h-14z" fill="#edecef"/>
<circle cx="49" cy="37.600" r="3.100" fill="#e6cbbf"/><path d="M45.700 38 q0 -4.500 3.300 -4.500 q3.300 0 3.300 4 q-3 -2.500 -5.500 0 v6 h-1.100z" fill="#3a2e2d"/>
<circle cx="52.500" cy="44.600" r="3.200" fill="#e4c6b8"/><path d="M49 45 q0 -4.500 3.500 -4.500 q3.600 0 3.600 4.500 q-3.500 -3 -7.100 0z" fill="#5a3f36"/>
<circle cx="62.200" cy="30.600" r="3" fill="#e8cfc3"/><path d="M59 31 q0 -4.500 3.200 -4.500 q3.300 0 3.300 4.500 q-3 -2.800 -5.400 0 v4 h-1.100z" fill="#3c302f"/><rect x="66" y="24.500" width="1.600" height="6" fill="#e6cdc0"/>
<path d="M59 36 q3 3 7 0 v3 h-7z" fill="#a9b4be"/>
<circle cx="71.500" cy="31.600" r="3.200" fill="#e8cfc4"/><path d="M68 32 q0 -4.800 3.500 -4.800 q3.600 0 3.800 4.800 l2.500 6 h-1.800 l-2 -6 q-3 -2.500 -6 0z" fill="#4a3733"/>
<rect x="9" y="34" width="17.500" height="4.500" fill="#1e6fe0"/>
<text x="9.300" y="38.300" font-family="'Liberation Sans','Noto Sans CJK JP',sans-serif" font-size="5" font-weight="700" fill="#0b3f9c" letter-spacing="-.2">My Disc</text>
<rect x="10" y="42.500" width="2.200" height="2.200" fill="#2d6fd0"/><text x="13.500" y="45" font-family="'Liberation Sans','Noto Sans CJK JP',sans-serif" font-size="3.600" fill="#51677f">Play</text>
<rect x="10" y="49" width="2.200" height="2.200" fill="#2d6fd0"/><text x="13.500" y="51.500" font-family="'Liberation Sans','Noto Sans CJK JP',sans-serif" font-size="3.600" fill="#51677f">Scenes</text>
<text x="10" y="11" font-family="'Liberation Sans','Noto Sans CJK JP',sans-serif" font-size="2.200" fill="#b9b9b9">卒業おめでとう</text><text x="10" y="13.800" font-family="'Liberation Sans','Noto Sans CJK JP',sans-serif" font-size="2.200" fill="#b9b9b9">これからもずっと</text><text x="10" y="16.600" font-family="'Liberation Sans','Noto Sans CJK JP',sans-serif" font-size="2.200" fill="#b9b9b9">友達 2023</text>
<text x="10.500" y="75" font-family="'Liberation Sans','Noto Sans CJK JP',sans-serif" font-size="2.200" fill="#c2c2c2">My Disc</text>
<path d="M96 40 h12" stroke="#bfe1f2" stroke-width=".9"/>
<text x="101" y="23" font-family="'Liberation Sans','Noto Sans CJK JP',sans-serif" font-size="5.400" fill="#5a5a5a" writing-mode="vertical-rl" style="writing-mode:vertical-rl" letter-spacing="-.1">卒業おめでとう</text></svg></div><div class="card" style="top:488px;height:92px"><svg width="113" height="85" viewBox="0 0 113 85" style="position:absolute;left:9px;top:2px"><defs><linearGradient id="sky" x1="0" y1="0" x2=".6" y2="1"><stop offset="0" stop-color="#9cbde8"/><stop offset=".55" stop-color="#a9c6ec"/><stop offset="1" stop-color="#c9daf0"/></linearGradient>
<filter id="bl" x="-20%" y="-20%" width="140%" height="140%"><feGaussianBlur stdDeviation="2.200"/></filter></defs>
<rect width="113" height="85" fill="url(#sky)"/>
<g filter="url(#bl)" fill="#fff"><ellipse cx="98" cy="10" rx="20" ry="12"/><ellipse cx="84" cy="22" rx="10" ry="7" opacity=".8"/><ellipse cx="45" cy="48" rx="22" ry="18" opacity=".92"/><ellipse cx="62" cy="40" rx="14" ry="12" opacity=".85"/><ellipse cx="30" cy="72" rx="28" ry="11" opacity=".9"/><ellipse cx="70" cy="74" rx="34" ry="9" opacity=".8"/><ellipse cx="105" cy="64" rx="9" ry="6" opacity=".7"/><ellipse cx="16" cy="15" rx="9" ry="2" opacity=".35"/></g>
<rect x="55" y="17" width="47.500" height="51.500" fill="#fff"/><rect x="55.500" y="68.500" width="47.500" height=".8" fill="#b9c6d6" opacity=".6"/>
<rect x="57.500" y="19" width="43.500" height="33" fill="#e3e6e9"/>
<rect x="68" y="19" width="8" height="14" fill="#6f767c"/><rect x="76" y="24" width="12" height="20" fill="#cfd3d6"/><rect x="57.500" y="19" width="10" height="18" fill="#f4f5f6"/>
<path d="M62.500 31 q0 -9 7.500 -9 q7.500 0 7.500 9 v2 h-15z" fill="#1d1f22"/><ellipse cx="70" cy="31" rx="5" ry="5.500" fill="#dcc1b1"/><path d="M64 27.500 q6 -4 12 0 v-3 q-6 -4 -12 0z" fill="#1d1f22"/>
<path d="M58.500 52 v-10 q2 -5 7 -5 h9 q5 0 7 5 v10z" fill="#6b7b85"/><path d="M67 37 l3 4 l3 -4z" fill="#eef1f4"/>
<path d="M85 36 q0 -11 8 -11 q8 0 8 11 v6 h-16z" fill="#1b1c20"/><ellipse cx="93" cy="34" rx="4.600" ry="5.300" fill="#e5cdbf"/><path d="M87.500 31 q5.500 -4 11 0 v-3 q-5.500 -3 -11 0z" fill="#1b1c20"/>
<path d="M82 52 v-8 q2 -4 6 -4 h10 q3 0 3 3 v9z" fill="#f2f4f7"/><path d="M91 41 l2 9 l2 -9z" fill="#1f3358"/>
<path d="M63 57 h37" stroke="#cfd5dc" stroke-width=".7"/>
<path d="M65.500 60 v3 M72 60.300 l-2 1.300 l2 1.300z M86 60.300 l2 1.300 l-2 1.300z" stroke="#8a929b" stroke-width=".5" fill="#8a929b"/><rect x="76.800" y="59.500" width="3.400" height="4" fill="none" stroke="#8a929b" stroke-width=".6"/><path d="M91.500 60 l1.500 1.600 l-1.500 1.600" stroke="#c4cad2" stroke-width=".5" fill="none"/>
<text x="21" y="35.800" font-family="'Liberation Sans','Noto Sans CJK JP',sans-serif" font-size="6" font-weight="700" fill="#5d6873" letter-spacing="-.1">My Disc</text>
<path d="M17 43.500 l1.800 1.200 l-1.800 1.200z M17 53 l1.800 1.200 l-1.800 1.200z" fill="#7f8b97"/>
<text x="21" y="46" font-family="'Liberation Sans','Noto Sans CJK JP',sans-serif" font-size="4.200" fill="#66717c">Play</text>
<text x="21" y="55.500" font-family="'Liberation Sans','Noto Sans CJK JP',sans-serif" font-size="4.200" fill="#66717c">Scenes</text></svg></div><div class="card" style="top:592px;height:55px;border-bottom:0"><svg width="113" height="85" viewBox="0 0 113 85" style="position:absolute;left:9px;top:2px"><rect width="113" height="85" fill="#f3f3f3"/>
<rect x="76" y="0" width="26" height="85" fill="#e8e2db"/><rect x="78.500" y="21" width="21" height="64" fill="#ebe5dd" stroke="#e1d9cf" stroke-width=".5"/>
<text x="9.700" y="22.900" font-family="'Liberation Sans','Noto Sans CJK JP',sans-serif" font-size="4.500" font-weight="700" fill="#7b6a4e" letter-spacing=".1">My Disc</text>
<rect x="9" y="25" width="59.500" height="60" fill="#ebe6de"/>
<rect x="20" y="27" width="48" height="20" fill="#cfd2d6"/><rect x="20" y="44" width="48" height="3" fill="#aeb3b8"/>
<g fill="#1f1c1d"><circle cx="28.500" cy="31.500" r="3"/><circle cx="38.500" cy="34" r="2.900"/><circle cx="50.500" cy="33" r="3"/><circle cx="61" cy="32.500" r="3"/><path d="M25 32 l-2 6 M53 34 l2 6 M64 33 l3 5" stroke="#1f1c1d" stroke-width="1.200"/></g>
<g fill="#eceef2"><rect x="24.500" y="35" width="8.500" height="11"/><rect x="34.500" y="37" width="8" height="11"/><rect x="46.500" y="36.500" width="8" height="10"/><rect x="57" y="36" width="8.500" height="10"/></g>
<g fill="#c9a98f"><rect x="27" y="33" width="3" height="3"/><rect x="37" y="35.500" width="3" height="3"/><rect x="49" y="34.500" width="3" height="3"/><rect x="59.500" y="34" width="3" height="3"/></g>
<g fill="#22395c"><rect x="25" y="45" width="9" height="10"/><rect x="35" y="47" width="8" height="8"/><rect x="46.500" y="46" width="8.500" height="9"/><rect x="57" y="45.500" width="9" height="10"/></g>
<rect x="36" y="40" width="5" height="7" fill="#b08a5e"/>
<text x="86" y="25" font-family="'Liberation Sans','Noto Sans CJK JP',sans-serif" font-size="5" font-weight="700" fill="#b5913f" style="writing-mode:vertical-rl" writing-mode="vertical-rl" letter-spacing="-.1">卒業おめでとう</text>
<text x="93.500" y="25" font-family="'Liberation Sans','Noto Sans CJK JP',sans-serif" font-size="2.800" fill="#b5913f" style="writing-mode:vertical-rl" writing-mode="vertical-rl">ま子さまトハ子さま</text></svg></div>
<div class="abs" style="left:1004px;top:171px;width:17px;height:17px;border:1px solid #9b9b9b;background:linear-gradient(#fdfdfd,#dcdcdc)"><div class="arrow up" style="left:3.500px;top:4.500px;width:8px;height:5px"></div></div>
<div class="abs" style="left:1004px;top:187px;width:17px;height:17px;border:1px solid #9b9b9b;background:linear-gradient(#fdfdfd,#e2e2e2)"><div class="abs" style="left:3px;top:5px;width:10px;height:1px;background:#222;box-shadow:0 2px 0 #222,0 4px 0 #222"></div></div>
<div class="abs" style="left:1004px;top:630px;width:17px;height:17px;border:1px solid #9b9b9b;background:linear-gradient(#fdfdfd,#dcdcdc)"><div class="arrow" style="left:3.500px;top:5.500px;width:8px;height:5px"></div></div>
<!--RIGHT_END-->
<!--BOTTOM_BEGIN--><div class="abs" style="left:10px;top:663px;width:744px;height:22px;border:1px solid #8a8a8a;background:#fdfbf0"><div class="abs" style="left:0;top:0;width:8px;height:20px;background:#7cc576"></div><div class="abs" style="left:8px;top:0;width:27px;height:20px;background:#a8d5fb"></div><div class="t" style="left:671px;top:6px;font-size:12px;color:#111;letter-spacing:-0.45px">218M/4.30G</div></div>
<div class="combo" style="left:782px;top:663px;width:102px;height:23px"><div class="t" style="left:3.500px;top:6px;letter-spacing:-0.72px">DVD (4.7G)</div><div class="arrow" style="left:89.300px;top:9.500px"></div></div>
<div class="combo" style="left:890px;top:663px;width:112px;height:23px"><div class="t" style="left:2.500px;top:6px;letter-spacing:-0.15px">Fit to Disc</div><div class="arrow" style="left:99px;top:9.500px"></div></div>
<!--BOTTOM_END-->
</body></html>
